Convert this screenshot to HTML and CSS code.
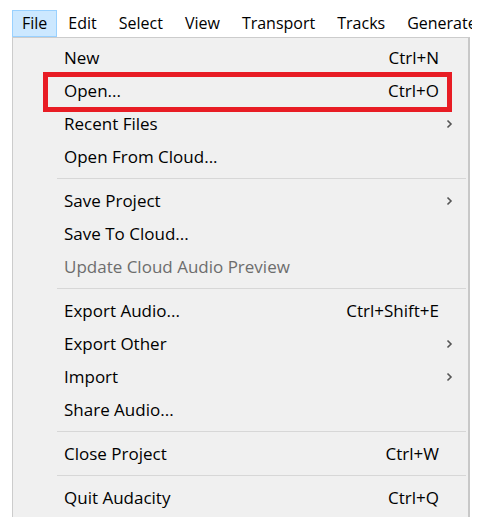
FILE: index.html
```html
<!DOCTYPE html>
<html>
<head>
<meta charset="utf-8">
<link rel="stylesheet" href="styles.css">
</head>
<body>
<div class="menubar">
  <span class="mb-item active">File</span>
  <span class="mb-item">Edit</span>
  <span class="mb-item">Select</span>
  <span class="mb-item">View</span>
  <span class="mb-item">Transport</span>
  <span class="mb-item">Tracks</span>
  <span class="mb-item">Generate</span>
</div>
<div class="dropdown">
  <div class="item"><span class="label">New</span><span class="key">Ctrl+N</span><span class="arrow"></span></div>
  <div class="item marked"><span class="label">Open...</span><span class="key">Ctrl+O</span><span class="arrow"></span><span class="redbox"></span></div>
  <div class="item"><span class="label">Recent Files</span><span class="key"></span><span class="arrow"><svg width="7" height="10" viewBox="0 0 7 10"><path d="M1.5 1.5 L5 5 L1.5 8.5" fill="none" stroke="#555" stroke-width="1.6"/></svg></span></div>
  <div class="item"><span class="label">Open From Cloud...</span><span class="key"></span><span class="arrow"></span></div>
  <div class="sep"></div>
  <div class="item"><span class="label">Save Project</span><span class="key"></span><span class="arrow"><svg width="7" height="10" viewBox="0 0 7 10"><path d="M1.5 1.5 L5 5 L1.5 8.5" fill="none" stroke="#555" stroke-width="1.6"/></svg></span></div>
  <div class="item"><span class="label">Save To Cloud...</span><span class="key"></span><span class="arrow"></span></div>
  <div class="item disabled"><span class="label">Update Cloud Audio Preview</span><span class="key"></span><span class="arrow"></span></div>
  <div class="sep"></div>
  <div class="item"><span class="label">Export Audio...</span><span class="key">Ctrl+Shift+E</span><span class="arrow"></span></div>
  <div class="item"><span class="label">Export Other</span><span class="key"></span><span class="arrow"><svg width="7" height="10" viewBox="0 0 7 10"><path d="M1.5 1.5 L5 5 L1.5 8.5" fill="none" stroke="#555" stroke-width="1.6"/></svg></span></div>
  <div class="item"><span class="label">Import</span><span class="key"></span><span class="arrow"><svg width="7" height="10" viewBox="0 0 7 10"><path d="M1.5 1.5 L5 5 L1.5 8.5" fill="none" stroke="#555" stroke-width="1.6"/></svg></span></div>
  <div class="item"><span class="label">Share Audio...</span><span class="key"></span><span class="arrow"></span></div>
  <div class="sep"></div>
  <div class="item"><span class="label">Close Project</span><span class="key">Ctrl+W</span><span class="arrow"></span></div>
  <div class="sep"></div>
  <div class="item"><span class="label">Quit Audacity</span><span class="key">Ctrl+Q</span><span class="arrow"></span></div>
</div>
</body>
</html>
```
FILE: styles.css
```css
html, body {
  margin: 0;
  padding: 0;
  background: #ffffff;
}
body {
  font-family: "Open Sans", "Noto Sans", sans-serif;
  font-size: 17px;
  color: #000;
  width: 488px;
  height: 520px;
  overflow: hidden;
}
.menubar {
  display: flex;
  padding: 10px 0 0 12px;
  height: 37px;
  box-sizing: border-box;
  width: 472px;
  overflow: hidden;
  white-space: nowrap;
  font-size: 16px;
}
.mb-item {
  padding: 0 10px;
  line-height: 25px;
  border: 1px solid transparent;
  height: 25px;
  flex: none;
}
.mb-item.active {
  background: #cce8ff;
  border-color: #99d1ff;
  padding: 0 9px;
}
.dropdown {
  margin-left: 12px;
  width: 458px;
  box-sizing: border-box;
  background: #f0f0f0;
  border: 1px solid #cccccc;
  border-right: 2px solid #c8c8c8;
  border-bottom: none;
  padding: 3px 0 3px 0;
}
.item {
  position: relative;
  display: grid;
  grid-template-columns: 1fr auto 21px;
  align-items: center;
  height: 33px;
  padding-left: 51px;
  padding-right: 8px;
  white-space: nowrap;
}
.item.disabled {
  color: #6d6d6d;
}
.key {
  text-align: right;
}
.arrow {
  display: flex;
  justify-content: center;
  align-items: center;
}
.sep {
  height: 11px;
  margin: 0 2px 0 44px;
  display: flex;
  align-items: center;
}
.sep::before {
  content: "";
  display: block;
  width: 100%;
  height: 1px;
  background: #d7d7d7;
}
.redbox {
  position: absolute;
  left: 30px;
  top: -2px;
  width: 409px;
  height: 40px;
  box-sizing: border-box;
  border: 5px solid #e81c24;
  pointer-events: none;
}
```
